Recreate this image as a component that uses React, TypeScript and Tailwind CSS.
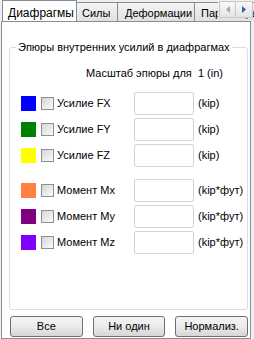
import React from 'react'

const rows = [
    { color: 'bg-[#0000ff]', label: 'Усилие FX', unit: '(kip)' },
    { color: 'bg-[#008000]', label: 'Усилие FY', unit: '(kip)' },
    { color: 'bg-[#ffff00]', label: 'Усилие FZ', unit: '(kip)' },
]
const moments = [
    { color: 'bg-[#ff8040]', label: 'Момент Mx', unit: '(kip*фут)' },
    { color: 'bg-[#800080]', label: 'Момент My', unit: '(kip*фут)' },
    { color: 'bg-[#8000ff]', label: 'Момент Mz', unit: '(kip*фут)' },
]

function Row({ color, label, unit }: { color: string; label: string; unit: string }) {
    return (
        <div className="flex items-center h-[26px]">
            <div className={`ml-[11px] w-[15px] h-[15px] ${color}`} />
            <div className="ml-[5px] w-[13px] h-[13px] border border-[#8f8f8f] bg-gradient-to-br from-[#d6d6d6] to-[#fbfbfb]" />
            <div className="ml-[3px] w-[77px] whitespace-nowrap">{label}</div>
            <div className="w-[60px] h-[23px] border border-[#d3d3d3] rounded-[2px] bg-white" />
            <div className="ml-[4px] whitespace-nowrap">{unit}</div>
        </div>
    )
}

export default function App() {
    return (
        <div className="w-[254px] h-[339px] bg-[#f0f0f0] overflow-hidden flex flex-col text-[11px] text-black" style={{ fontFamily: '"Liberation Sans", Arial, sans-serif' }}>
            <div className="relative h-[21px] flex items-end pl-[2px] overflow-hidden whitespace-nowrap">
                <div className="relative z-10 -mb-px h-[22px] w-[75px] shrink-0 bg-white border border-b-0 border-[#898c95] pl-[5px] pt-[3px] text-[12px]">Диафрагмы</div>
                <div className="h-[19px] w-[41px] shrink-0 bg-gradient-to-b from-[#f4f4f4] to-[#e1e1e1] border border-l-0 border-b-0 border-[#898c95] pl-[5px] pt-[2px]">Силы</div>
                <div className="h-[19px] w-[77px] shrink-0 bg-gradient-to-b from-[#f4f4f4] to-[#e1e1e1] border border-l-0 border-b-0 border-[#898c95] pl-[7px] pt-[2px]">Деформации</div>
                <div className="h-[19px] w-[60px] shrink-0 bg-gradient-to-b from-[#f4f4f4] to-[#e1e1e1] border border-l-0 border-b-0 border-[#898c95] pl-[6px] pt-[2px]">Параметры</div>
                <div className="absolute left-[218px] top-[1px] flex bg-[#f0f0f0] pl-px">
                    <div className="w-[17px] h-[17px] border border-[#c7c7c7] bg-gradient-to-b from-[#f8f8f8] to-[#e4e4e4] flex items-center justify-center">
                        <svg width="4" height="7" viewBox="0 0 4 7"><path d="M4 0 L0 3.5 L4 7 Z" fill="#a0a6b8" /></svg>
                    </div>
                    <div className="w-[17px] h-[17px] border border-l-0 border-[#c7c7c7] bg-gradient-to-b from-[#f8f8f8] to-[#e4e4e4] flex items-center justify-center">
                        <svg width="4" height="7" viewBox="0 0 4 7"><path d="M0 0 L4 3.5 L0 7 Z" fill="#3d5a9c" /></svg>
                    </div>
                </div>
            </div>
            <div className="ml-[1px] w-[250px] flex-1 bg-white border border-[#898c95] flex flex-col pl-[7px] pr-[2px]">
                <fieldset className="mt-[18px] h-[270px] border border-[#d5dfe5] rounded-[3px]">
                    <legend className="ml-[6px] px-[2px] leading-[14px] whitespace-nowrap">Эпюры внутренних усилий в диафрагмах</legend>
                    <div className="mt-[12px] pl-[76px] leading-[14px] whitespace-nowrap">Масштаб эпюры для&nbsp; 1 (in)</div>
                    <div className="mt-[10px]">
                        {rows.map(r => <Row key={r.label} {...r} />)}
                    </div>
                    <div className="mt-[9px]">
                        {moments.map(r => <Row key={r.label} {...r} />)}
                    </div>
                </fieldset>
                <div className="mt-[6px] flex gap-[10px] pl-[1px]">
                    {['Все', 'Ни один', 'Нормализ.'].map(t => (
                        <div key={t} className="w-[73px] h-[21px] border border-[#707070] rounded-[3px] bg-gradient-to-b from-[#f4f4f4] via-[#ebebeb] to-[#d6d6d6] flex items-center justify-center">{t}</div>
                    ))}
                </div>
            </div>
        </div>
    )
}
